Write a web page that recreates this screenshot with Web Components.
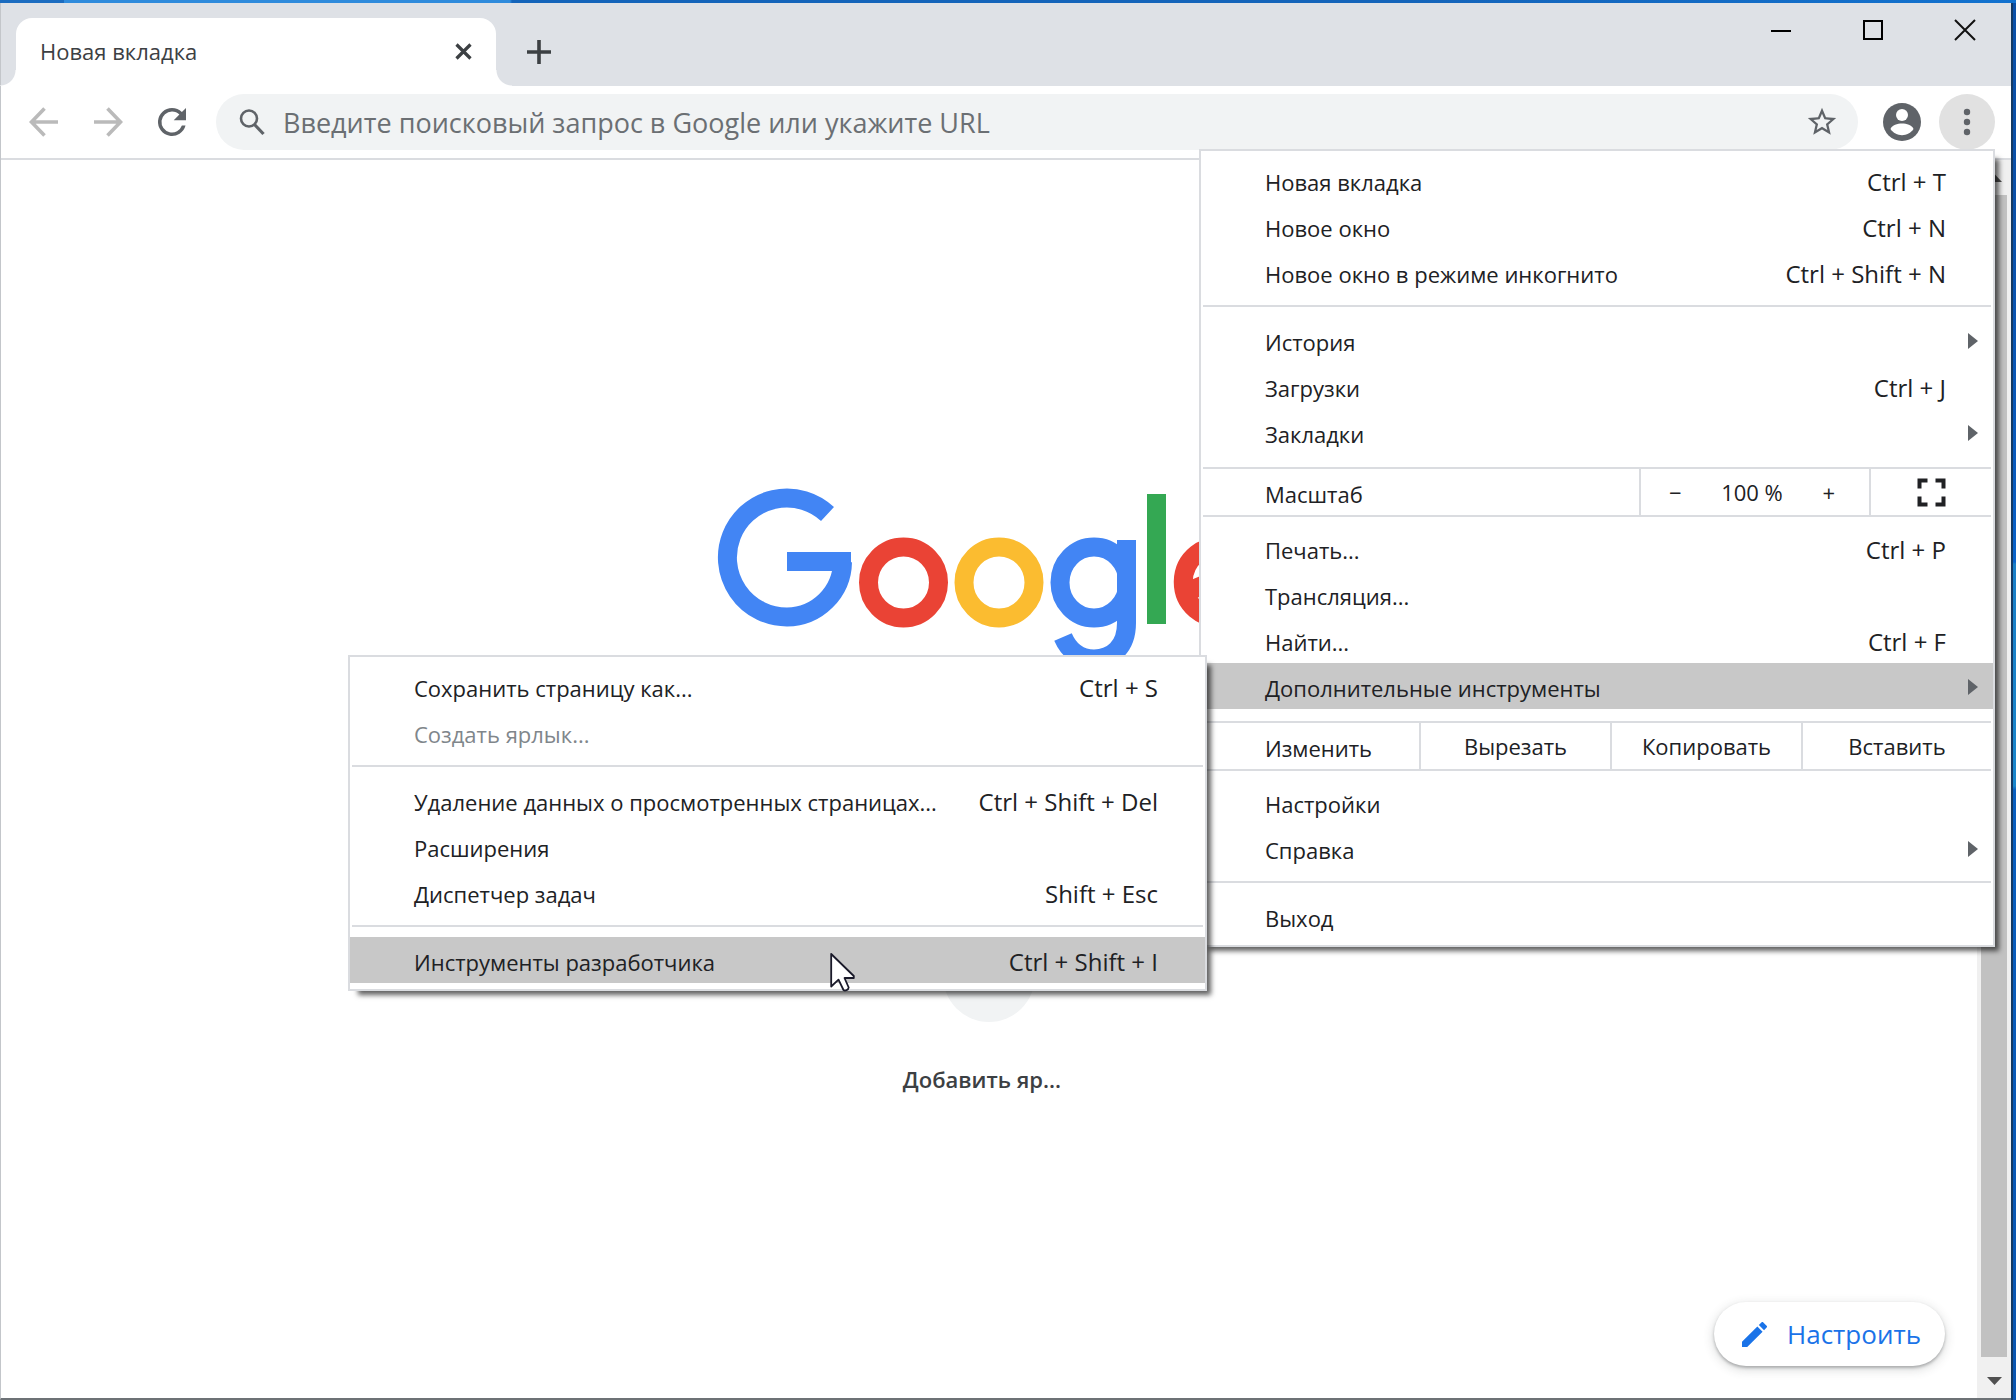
<!DOCTYPE html>
<html lang="ru">
<head>
<meta charset="utf-8">
<title>Новая вкладка</title>
<style>
html, body { height: 100%; }
body { margin: 0; overflow: hidden; font-family: "Open Sans", "Noto Sans", sans-serif; font-size: 22px; line-height: 30px; color: #202124; }
</style>
</head>
<body>
<desktop-frame>
  <browser-window>
    <tab-strip slot="tabs">
      <browser-tab>Новая вкладка</browser-tab>
    </tab-strip>
    <browser-toolbar slot="toolbar"></browser-toolbar>
    <new-tab-page slot="page"></new-tab-page>
    <page-scrollbar slot="scroll"></page-scrollbar>

    <popup-menu slot="menu" class="main" aria-label="Меню">
      <menu-item hint="Ctrl + T">Новая вкладка</menu-item>
      <menu-item hint="Ctrl + N">Новое окно</menu-item>
      <menu-item hint="Ctrl + Shift + N">Новое окно в режиме инкогнито</menu-item>
      <menu-separator></menu-separator>
      <menu-item submenu>История</menu-item>
      <menu-item hint="Ctrl + J">Загрузки</menu-item>
      <menu-item submenu>Закладки</menu-item>
      <menu-band kind="zoom">Масштаб</menu-band>
      <menu-item hint="Ctrl + P">Печать...</menu-item>
      <menu-item>Трансляция...</menu-item>
      <menu-item hint="Ctrl + F">Найти...</menu-item>
      <menu-item submenu active>Дополнительные инструменты</menu-item>
      <menu-band kind="edit">Изменить</menu-band>
      <menu-item>Настройки</menu-item>
      <menu-item submenu>Справка</menu-item>
      <menu-separator></menu-separator>
      <menu-item>Выход</menu-item>
    </popup-menu>

    <popup-menu slot="menu" class="tools" aria-label="Дополнительные инструменты">
      <menu-item hint="Ctrl + S">Сохранить страницу как...</menu-item>
      <menu-item disabled>Создать ярлык...</menu-item>
      <menu-separator></menu-separator>
      <menu-item hint="Ctrl + Shift + Del">Удаление данных о просмотренных страницах...</menu-item>
      <menu-item>Расширения</menu-item>
      <menu-item hint="Shift + Esc">Диспетчер задач</menu-item>
      <menu-separator></menu-separator>
      <menu-item hint="Ctrl + Shift + I" active>Инструменты разработчика</menu-item>
    </popup-menu>
    <mouse-pointer slot="menu"></mouse-pointer>
  </browser-window>
</desktop-frame>

<script>
const BASE = `
*, *::before, *::after { box-sizing: border-box; }
:host { display: block; box-sizing: border-box; }
button, input { font: inherit; color: inherit; background: none; border: 0; padding: 0; margin: 0; outline: 0; }
svg { display: block; flex: none; }`;

function component(name, css, html) {
  customElements.define(name, class extends HTMLElement {
    connectedCallback() {
      if (this.shadowRoot) return;
      const t = document.createElement('template');
      t.innerHTML = `<style>${BASE}${css}</style>${typeof html === 'function' ? html(this) : html}`;
      this.attachShadow({ mode: 'open' }).append(t.content.cloneNode(true));
    }
  });
}

/* Desktop behind the window, visible on the top and right edges */
component('desktop-frame', `
:host { height: 100vh; padding: 3px 5px 0 0;
  background:
    linear-gradient(90deg, #1b6cc0 0 64px, #2f8bdc 64px 510px, #1464ba 512px 70%, #1272cf) top / 100% 3px no-repeat,
    linear-gradient(#0b50a8 0 200px, #0a5cc0 500px, #0a64cc 562px, #1a7fc8 564px, #1a86cc 786px, #0a5fc0 790px, #0a55b0); }`,
`<slot></slot>`);

component('browser-window', `
:host { position: relative; height: 100%; display: flex; flex-direction: column; background: #fff;
  border: solid #c3c6ca; border-width: 0 0 2px 1px; border-bottom-color: #6d7276; box-shadow: 2px 0 0 #153a63; }
.body { flex: 1; min-height: 0; display: flex; }
.body slot[name=page]::slotted(*) { flex: 1; }
::slotted(.main) { position: absolute; top: 146px; right: 16px; width: 796px; z-index: 1; }
::slotted(.tools) { position: absolute; top: 652px; right: 804px; width: 859px; z-index: 2; }
::slotted(mouse-pointer) { position: absolute; top: 949px; right: 1155px; z-index: 3; }`,
`<slot name="tabs"></slot><slot name="toolbar"></slot>
<div class="body"><slot name="page"></slot><slot name="scroll"></slot></div>
<slot name="menu"></slot>`);

component('tab-strip', `
:host { display: flex; align-items: flex-end; height: 83px; background: #dee1e6; padding-left: 15px; }
.add { width: 56px; height: 68px; margin-left: 15px; display: grid; place-items: center; }
.controls { margin-left: auto; align-self: flex-start; display: flex; }
.controls button { width: 92px; height: 54px; display: grid; place-items: center; }`,
`<slot></slot>
<button class="add" aria-label="Открыть вкладку"><svg width="24" height="24" viewBox="0 0 24 24"><path d="M12 0v24M0 12h24" stroke="#3c4043" stroke-width="3.6"/></svg></button>
<div class="controls">
<button aria-label="Свернуть"><svg width="20" height="20" viewBox="0 0 20 20"><path d="M0 11h20" stroke="#000" stroke-width="2"/></svg></button>
<button aria-label="Развернуть"><svg width="20" height="20" viewBox="0 0 20 20"><path d="M1 1h18v18H1z" fill="none" stroke="#000" stroke-width="2"/></svg></button>
<button aria-label="Закрыть"><svg width="22" height="22" viewBox="0 0 22 22"><path d="M1 1l20 20M21 1L1 21" stroke="#111" stroke-width="2"/></svg></button>
</div>`);

component('browser-tab', `
:host { position: relative; display: flex; align-items: center; width: 480px; height: 68px; padding: 0 24px 2px; background: #fff; border-radius: 16px 16px 0 0; color: #3c4043; }
:host::before, :host::after { content: ""; position: absolute; bottom: 0; width: 16px; height: 16px; }
:host::before { right: 100%; background: radial-gradient(circle at 0 0, transparent 15px, #fff 16px); }
:host::after { left: 100%; background: radial-gradient(circle at 100% 0, transparent 15px, #fff 16px); }
span { flex: 1; }`,
`<span><slot></slot></span>
<button aria-label="Закрыть вкладку"><svg width="17" height="17" viewBox="0 0 17 17"><path d="M1.5 1.5l14 14M15.5 1.5l-14 14" stroke="#3c4043" stroke-width="3.2"/></svg></button>`);

component('browser-toolbar', `
:host { display: flex; align-items: center; height: 74px; padding: 0 16px 0 11px; border-bottom: 2px solid #dadce0; }
.nav { width: 64px; height: 56px; display: grid; place-items: center; }
.omni { flex: 1; display: flex; align-items: center; height: 56px; margin-left: 12px; padding: 0 19px 0 23px; border-radius: 28px; background: #f1f3f4; color: #6b6f73; }
input { flex: 1; min-width: 0; height: 56px; margin-left: 18px; font-size: 27px; }
input::placeholder { color: #6b6f73; opacity: 1; }
.user { width: 56px; height: 56px; margin-left: 16px; display: grid; place-items: center; }
.more { width: 56px; height: 56px; margin-left: 9px; border-radius: 50%; background: #e1e1e1; display: grid; place-items: center; }`,
`<button class="nav" aria-label="Назад"><svg width="30" height="30" viewBox="0 0 30 30"><path d="M29 15H3M15.5 1.5L2.5 15l13 13.5" fill="none" stroke="#bababa" stroke-width="3.6"/></svg></button>
<button class="nav" aria-label="Вперёд"><svg width="30" height="30" viewBox="0 0 30 30"><path d="M1 15h26M14.5 1.5l13 13.5-13 13.5" fill="none" stroke="#bababa" stroke-width="3.6"/></svg></button>
<button class="nav" aria-label="Обновить"><svg width="42" height="42" viewBox="0 0 24 24"><path fill="#5f6368" d="M17.65 6.35A7.96 7.96 0 0 0 12 4a8 8 0 1 0 7.73 10h-2.08A6 6 0 1 1 12 6c1.66 0 3.14.69 4.22 1.78L13 11h7V4z"/></svg></button>
<div class="omni">
<svg width="26" height="28" viewBox="0 0 26 28"><circle cx="10" cy="10.5" r="8" fill="none" stroke="#5f6368" stroke-width="2.6"/><path d="M15.5 16.5l9 9.5" stroke="#5f6368" stroke-width="3.2"/></svg>
<input type="text" aria-label="Адресная строка" placeholder="Введите поисковый запрос в Google или укажите URL">
<button aria-label="Добавить в закладки"><svg width="34" height="34" viewBox="0 0 24 24"><path fill="#5f6368" d="M22 9.24l-7.19-.62L12 2 9.19 8.63 2 9.24l5.46 4.73L5.82 21 12 17.27 18.18 21l-1.63-7.03zM12 15.4l-3.76 2.27 1-4.28-3.32-2.88 4.38-.38L12 6.1l1.71 4.04 4.38.38-3.32 2.88 1 4.28z"/></svg></button>
</div>
<button class="user" aria-label="Профиль"><svg width="38" height="38" viewBox="0 0 38 38"><circle cx="19" cy="19" r="19" fill="#5f6368"/><circle cx="19" cy="12" r="6" fill="#fff"/><path d="M7.5 26c1.5-4 7-5.5 11.5-5.500S29 22 30.500 26c-2.500 3.900-7 6.200-11.500 6.200S10 29.900 7.500 26z" fill="#fff"/></svg></button>
<button class="more" aria-label="Настройка и управление"><svg width="8" height="28" viewBox="0 0 8 28" fill="#5f6368"><circle cx="4" cy="4" r="3.2"/><circle cx="4" cy="14" r="3.2"/><circle cx="4" cy="24" r="3.2"/></svg></button>`);

component('new-tab-page', `
:host { position: relative; display: flex; flex-direction: column; align-items: center; padding-top: 328px; }
.tile { display: flex; flex-direction: column; align-items: center; margin-top: 258px; }
.disc { width: 92px; height: 92px; border-radius: 50%; background: #f1f3f4; }
.name { margin-top: 42px; padding-right: 14px; color: #3c4043; font-weight: 600; }
.edit { position: absolute; right: 32px; bottom: 32px; height: 64px; padding: 0 24px 0 28px; display: flex; align-items: center; gap: 20px; border-radius: 32px; background: #fff; color: #1a73e8; font-size: 26px;
  box-shadow: 0 2px 3px rgba(60,64,67,.35), 0 3px 10px 2px rgba(60,64,67,.15); }`,
`<svg width="546" height="184" viewBox="717 487 546 184" fill="none" stroke-width="19" role="img" aria-label="Google">
<clipPath id="bowl"><rect x="1040" y="530" width="97" height="150"/></clipPath>
<path stroke="#4285f4" d="M828.5 513A59.5 59.5 0 1 0 788 616A56 56 0 0 0 843.5 561M788 560.5H852"/>
<ellipse stroke="#ea4335" cx="904.5" cy="581.5" rx="35" ry="35.5"/>
<ellipse stroke="#fbbc30" cx="1000" cy="581.5" rx="35" ry="35.5"/>
<ellipse stroke="#4285f4" cx="1095" cy="581.5" rx="34" ry="35.5" clip-path="url(#bowl)"/>
<path stroke="#4285f4" d="M1127.5 539V622C1127.5 646 1113 658 1095 658C1081 658 1070 650 1064 636"/>
<rect fill="#34a853" x="1148" y="493" width="19" height="130"/>
<path stroke="#ea4335" d="M1250 598A35 35.5 0 1 1 1250.5 565L1190 590"/>
</svg>
<div class="tile"><div class="disc"></div><span class="name">Добавить яр...</span></div>
<button class="edit"><svg width="25" height="25" viewBox="3 3 18 18"><path fill="#1a73e8" d="M3 17.25V21h3.75L17.81 9.94l-3.75-3.75zM20.71 7.04a1 1 0 0 0 0-1.41l-2.34-2.34a1 1 0 0 0-1.41 0l-1.83 1.83 3.75 3.75z"/></svg>Настроить</button>`);

component('page-scrollbar', `
:host { width: 34px; display: flex; flex-direction: column; align-items: center; background: #f0f0f0; }
button { height: 35px; width: 100%; display: grid; place-items: center; }
.thumb { flex: 1; width: 26px; background: #c1c1c1; margin-bottom: 6px; }`,
`<button aria-label="Вверх"><svg width="15" height="8" viewBox="0 0 15 8"><path d="M0 8L7.5 0 15 8z" fill="#505050"/></svg></button>
<div class="thumb"></div>
<button aria-label="Вниз"><svg width="15" height="8" viewBox="0 0 15 8"><path d="M0 0h15L7.5 8z" fill="#505050"/></svg></button>`);

component('popup-menu', `
:host { padding: 6px 0; background: #fff; border: 2px solid #dadce0; box-shadow: 7px 7px 5px -3px rgba(0,0,0,.62); }`,
`<slot></slot>`);

component('menu-item', `
button { display: flex; align-items: center; justify-content: space-between; width: 100%; height: 46px; padding: 3px 47px 0 64px; position: relative; text-align: left; white-space: nowrap; }
:host([active]) button { background: #c8c8c8; }
:host([disabled]) button { color: #80868b; }
.hint { font-size: 24px; }
svg { position: absolute; right: 15px; top: 16px; }`,
el => `<button role="menuitem" ${el.hasAttribute('disabled') ? 'disabled' : ''}><span><slot></slot></span>${
  el.hasAttribute('hint') ? `<span class="hint">${el.getAttribute('hint')}</span>` : ''}${
  el.hasAttribute('submenu') ? '<svg width="10" height="16" viewBox="0 0 10 16"><path d="M0 0l10 8-10 8z" fill="#5f6368"/></svg>' : ''}</button>`);

component('menu-separator', `:host { height: 2px; margin: 10px 2px; background: #dadce0; }`, ``);

component('menu-band', `
:host { display: flex; height: 50px; margin: 12px 2px 8px; border: solid #dadce0; border-width: 2px 0; white-space: nowrap; }
.label { flex: 1; padding: 10px 0 0 62px; }
.cell { display: flex; align-items: center; justify-content: center; border-left: 2px solid #dadce0; height: 100%; }
.zoom { width: 230px; justify-content: space-between; padding: 0 34px 0 28px; }
.full { width: 122px; }
.cmd { width: 191px; }
.last { width: 190px; }`,
el => `<span class="label"><slot></slot></span>` + (el.getAttribute('kind') === 'zoom'
  ? `<div class="cell zoom"><button aria-label="Уменьшить">−</button><span>100 %</span><button aria-label="Увеличить">+</button></div>
<button class="cell full" aria-label="Во весь экран"><svg width="29" height="29" viewBox="0 0 29 29"><path d="M2.5 10.5V2.5H10.5M18.5 2.5H26.5V10.5M26.5 18.5V26.5H18.5M10.5 26.5H2.5V18.5" fill="none" stroke="#202124" stroke-width="4"/></svg></button>`
  : `<button class="cell cmd">Вырезать</button><button class="cell cmd">Копировать</button><button class="cell last">Вставить</button>`));

component('mouse-pointer', `:host { pointer-events: none; }`,
`<svg width="26" height="40" viewBox="0 0 26 40"><path d="M1.2 2v32.5l7.300-6.800 5 10.300c1.500 1.200 5 0 5.200-2.500L14.500 26h9.300v-2z" fill="#fff" stroke="#1a1a2a" stroke-width="1.8" stroke-linejoin="round"/></svg>`);
</script>
</body>
</html>
